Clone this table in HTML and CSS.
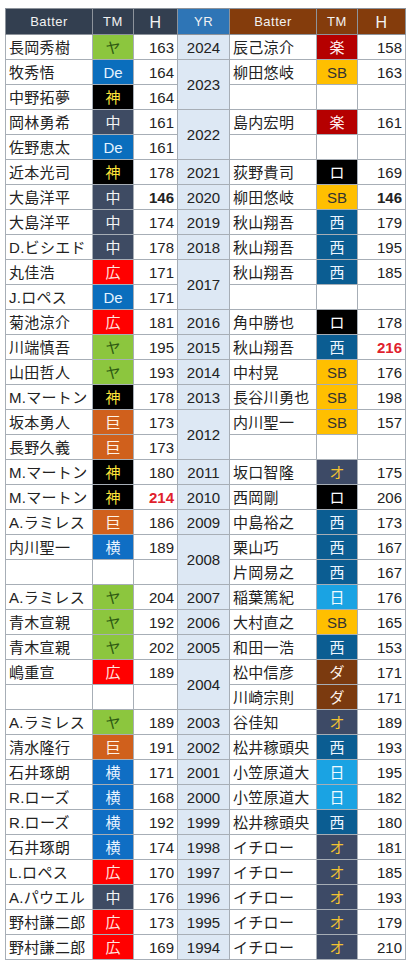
FILE: index.html
```html
<!DOCTYPE html>
<html lang="ja">
<head>
    <meta charset="UTF-8">
    <meta name="viewport" content="width=device-width, initial-scale=1.0">
    <title>最多安打</title>
    <link rel="stylesheet" href="styles.css">
</head>
<body>
    <table class="hits">
        <colgroup>
            <col class="c-name"><col class="c-tm"><col class="c-h">
            <col class="c-yr">
            <col class="c-name"><col class="c-tm"><col class="c-h2">
        </colgroup>
        <thead>
            <tr>
                <th class="hd-ce">Batter</th>
                <th class="hd-ce">TM</th>
                <th class="hd-ce big">H</th>
                <th class="hd-yr">YR</th>
                <th class="hd-pa">Batter</th>
                <th class="hd-pa">TM</th>
                <th class="hd-pa big">H</th>
            </tr>
        </thead>
        <tbody>
            <tr><td class="nm">長岡秀樹</td><td class="tm t-ya">ヤ</td><td class="h">163</td><td class="yr">2024</td><td class="nm">辰己涼介</td><td class="tm t-raku">楽</td><td class="h">158</td></tr>
            <tr><td class="nm">牧秀悟</td><td class="tm t-de">De</td><td class="h">164</td><td class="yr" rowspan="2">2023</td><td class="nm">柳田悠岐</td><td class="tm t-sb">SB</td><td class="h">163</td></tr>
            <tr><td class="nm">中野拓夢</td><td class="tm t-tora">神</td><td class="h">164</td><td class="nm"></td><td class="tm"></td><td class="h"></td></tr>
            <tr><td class="nm">岡林勇希</td><td class="tm t-chu">中</td><td class="h">161</td><td class="yr" rowspan="2">2022</td><td class="nm">島内宏明</td><td class="tm t-raku">楽</td><td class="h">161</td></tr>
            <tr><td class="nm">佐野恵太</td><td class="tm t-de">De</td><td class="h">161</td><td class="nm"></td><td class="tm"></td><td class="h"></td></tr>
            <tr><td class="nm">近本光司</td><td class="tm t-tora">神</td><td class="h">178</td><td class="yr">2021</td><td class="nm">荻野貴司</td><td class="tm t-lotte">ロ</td><td class="h">169</td></tr>
            <tr><td class="nm">大島洋平</td><td class="tm t-chu">中</td><td class="h best">146</td><td class="yr">2020</td><td class="nm">柳田悠岐</td><td class="tm t-sb">SB</td><td class="h best">146</td></tr>
            <tr><td class="nm">大島洋平</td><td class="tm t-chu">中</td><td class="h">174</td><td class="yr">2019</td><td class="nm">秋山翔吾</td><td class="tm t-sei">西</td><td class="h">179</td></tr>
            <tr><td class="nm">D.ビシエド</td><td class="tm t-chu">中</td><td class="h">178</td><td class="yr">2018</td><td class="nm">秋山翔吾</td><td class="tm t-sei">西</td><td class="h">195</td></tr>
            <tr><td class="nm">丸佳浩</td><td class="tm t-hiro">広</td><td class="h">171</td><td class="yr" rowspan="2">2017</td><td class="nm">秋山翔吾</td><td class="tm t-sei">西</td><td class="h">185</td></tr>
            <tr><td class="nm">J.ロペス</td><td class="tm t-de">De</td><td class="h">171</td><td class="nm"></td><td class="tm"></td><td class="h"></td></tr>
            <tr><td class="nm">菊池涼介</td><td class="tm t-hiro">広</td><td class="h">181</td><td class="yr">2016</td><td class="nm">角中勝也</td><td class="tm t-lotte">ロ</td><td class="h">178</td></tr>
            <tr><td class="nm">川端慎吾</td><td class="tm t-ya">ヤ</td><td class="h">195</td><td class="yr">2015</td><td class="nm">秋山翔吾</td><td class="tm t-sei">西</td><td class="h record">216</td></tr>
            <tr><td class="nm">山田哲人</td><td class="tm t-ya">ヤ</td><td class="h">193</td><td class="yr">2014</td><td class="nm">中村晃</td><td class="tm t-sb">SB</td><td class="h">176</td></tr>
            <tr><td class="nm">M.マートン</td><td class="tm t-tora">神</td><td class="h">178</td><td class="yr">2013</td><td class="nm">長谷川勇也</td><td class="tm t-sb">SB</td><td class="h">198</td></tr>
            <tr><td class="nm">坂本勇人</td><td class="tm t-kyo">巨</td><td class="h">173</td><td class="yr" rowspan="2">2012</td><td class="nm">内川聖一</td><td class="tm t-sb">SB</td><td class="h">157</td></tr>
            <tr><td class="nm">長野久義</td><td class="tm t-kyo">巨</td><td class="h">173</td><td class="nm"></td><td class="tm"></td><td class="h"></td></tr>
            <tr><td class="nm">M.マートン</td><td class="tm t-tora">神</td><td class="h">180</td><td class="yr">2011</td><td class="nm">坂口智隆</td><td class="tm t-orix">オ</td><td class="h">175</td></tr>
            <tr><td class="nm">M.マートン</td><td class="tm t-tora">神</td><td class="h record">214</td><td class="yr">2010</td><td class="nm">西岡剛</td><td class="tm t-lotte">ロ</td><td class="h">206</td></tr>
            <tr><td class="nm">A.ラミレス</td><td class="tm t-kyo">巨</td><td class="h">186</td><td class="yr">2009</td><td class="nm">中島裕之</td><td class="tm t-sei">西</td><td class="h">173</td></tr>
            <tr><td class="nm">内川聖一</td><td class="tm t-yoko">横</td><td class="h">189</td><td class="yr" rowspan="2">2008</td><td class="nm">栗山巧</td><td class="tm t-sei">西</td><td class="h">167</td></tr>
            <tr><td class="nm"></td><td class="tm"></td><td class="h"></td><td class="nm">片岡易之</td><td class="tm t-sei">西</td><td class="h">167</td></tr>
            <tr><td class="nm">A.ラミレス</td><td class="tm t-ya">ヤ</td><td class="h">204</td><td class="yr">2007</td><td class="nm">稲葉篤紀</td><td class="tm t-ham">日</td><td class="h">176</td></tr>
            <tr><td class="nm">青木宣親</td><td class="tm t-ya">ヤ</td><td class="h">192</td><td class="yr">2006</td><td class="nm">大村直之</td><td class="tm t-sb">SB</td><td class="h">165</td></tr>
            <tr><td class="nm">青木宣親</td><td class="tm t-ya">ヤ</td><td class="h">202</td><td class="yr">2005</td><td class="nm">和田一浩</td><td class="tm t-sei">西</td><td class="h">153</td></tr>
            <tr><td class="nm">嶋重宣</td><td class="tm t-hiro">広</td><td class="h">189</td><td class="yr" rowspan="2">2004</td><td class="nm">松中信彦</td><td class="tm t-dai">ダ</td><td class="h">171</td></tr>
            <tr><td class="nm"></td><td class="tm"></td><td class="h"></td><td class="nm">川崎宗則</td><td class="tm t-dai">ダ</td><td class="h">171</td></tr>
            <tr><td class="nm">A.ラミレス</td><td class="tm t-ya">ヤ</td><td class="h">189</td><td class="yr">2003</td><td class="nm">谷佳知</td><td class="tm t-orix">オ</td><td class="h">189</td></tr>
            <tr><td class="nm">清水隆行</td><td class="tm t-kyo">巨</td><td class="h">191</td><td class="yr">2002</td><td class="nm">松井稼頭央</td><td class="tm t-sei">西</td><td class="h">193</td></tr>
            <tr><td class="nm">石井琢朗</td><td class="tm t-yoko">横</td><td class="h">171</td><td class="yr">2001</td><td class="nm">小笠原道大</td><td class="tm t-ham">日</td><td class="h">195</td></tr>
            <tr><td class="nm">R.ローズ</td><td class="tm t-yoko">横</td><td class="h">168</td><td class="yr">2000</td><td class="nm">小笠原道大</td><td class="tm t-ham">日</td><td class="h">182</td></tr>
            <tr><td class="nm">R.ローズ</td><td class="tm t-yoko">横</td><td class="h">192</td><td class="yr">1999</td><td class="nm">松井稼頭央</td><td class="tm t-sei">西</td><td class="h">180</td></tr>
            <tr><td class="nm">石井琢朗</td><td class="tm t-yoko">横</td><td class="h">174</td><td class="yr">1998</td><td class="nm">イチロー</td><td class="tm t-orix">オ</td><td class="h">181</td></tr>
            <tr><td class="nm">L.ロペス</td><td class="tm t-hiro">広</td><td class="h">170</td><td class="yr">1997</td><td class="nm">イチロー</td><td class="tm t-orix">オ</td><td class="h">185</td></tr>
            <tr><td class="nm">A.パウエル</td><td class="tm t-chu">中</td><td class="h">176</td><td class="yr">1996</td><td class="nm">イチロー</td><td class="tm t-orix">オ</td><td class="h">193</td></tr>
            <tr><td class="nm">野村謙二郎</td><td class="tm t-hiro">広</td><td class="h">173</td><td class="yr">1995</td><td class="nm">イチロー</td><td class="tm t-orix">オ</td><td class="h">179</td></tr>
            <tr><td class="nm">野村謙二郎</td><td class="tm t-hiro">広</td><td class="h">169</td><td class="yr">1994</td><td class="nm">イチロー</td><td class="tm t-orix">オ</td><td class="h">210</td></tr>
        </tbody>
    </table>
</body>
</html>
```

FILE: styles.css
```css
* {
    margin: 0;
    padding: 0;
    box-sizing: border-box;
}

body {
    background: #fff;
    padding: 8px 5px;
    font-family: 'Liberation Sans', 'Noto Sans CJK JP', sans-serif;
    color: #222;
}

.hits {
    border-collapse: collapse;
    table-layout: fixed;
    width: 400px;
}

.c-name { width: 87px; }
.c-tm { width: 41px; }
.c-h { width: 44px; }
.c-yr { width: 52px; }
.c-h2 { width: 48px; }

.hits th,
.hits td {
    border: 1px solid #a7aeb6;
    height: 25px;
    line-height: 23px;
    white-space: nowrap;
    overflow: hidden;
}

.hits th {
    height: 24px;
    color: #f2f2f2;
    font-weight: normal;
    font-size: 13px;
    letter-spacing: 0.5px;
    text-align: center;
    border-color: #8d939b;
}

.hits th.big {
    font-size: 16px;
    padding-top: 2px;
}

.hd-ce { background: #333f50; }
.hd-yr { background: #2e75b6; }
.hd-pa { background: #843c0c; }

.nm {
    font-size: 15px;
    padding: 0 3px;
    text-align: left;
    letter-spacing: 0.3px;
}

.tm {
    font-size: 15px;
    text-align: center;
    color: #fff;
}

.h {
    font-size: 15px;
    text-align: right;
    padding-right: 3px;
}

.h.best {
    font-weight: bold;
}

.h.record {
    font-weight: bold;
    color: #e0202c;
}

.yr {
    background: #dde8f4;
    font-size: 15px;
    text-align: center;
}

/* team colours */
.t-ya { background: #8cc63e; color: #2d5a12; }
.t-de { background: #0a6ebd; color: #e6f4ff; }
.t-tora { background: #000; color: #ffe53b; }
.t-chu { background: #3e4b63; color: #f4f4f4; }
.t-hiro { background: #ff0000; color: #ffe9e0; }
.t-kyo { background: #d0601c; color: #fff2e6; }
.t-yoko { background: #0f6ec4; color: #eaf4ff; }
.t-raku { background: #b50000; color: #fff0f0; }
.t-sb { background: #ffbf00; color: #333; }
.t-lotte { background: #000; color: #fff; }
.t-sei { background: #0b5d92; color: #eef6ff; }
.t-orix { background: #3d4a66; color: #f2c232; }
.t-ham { background: #1aa3e3; color: #f0faff; }
.t-dai { background: #7b3a0f; color: #fff4ea; }
```
